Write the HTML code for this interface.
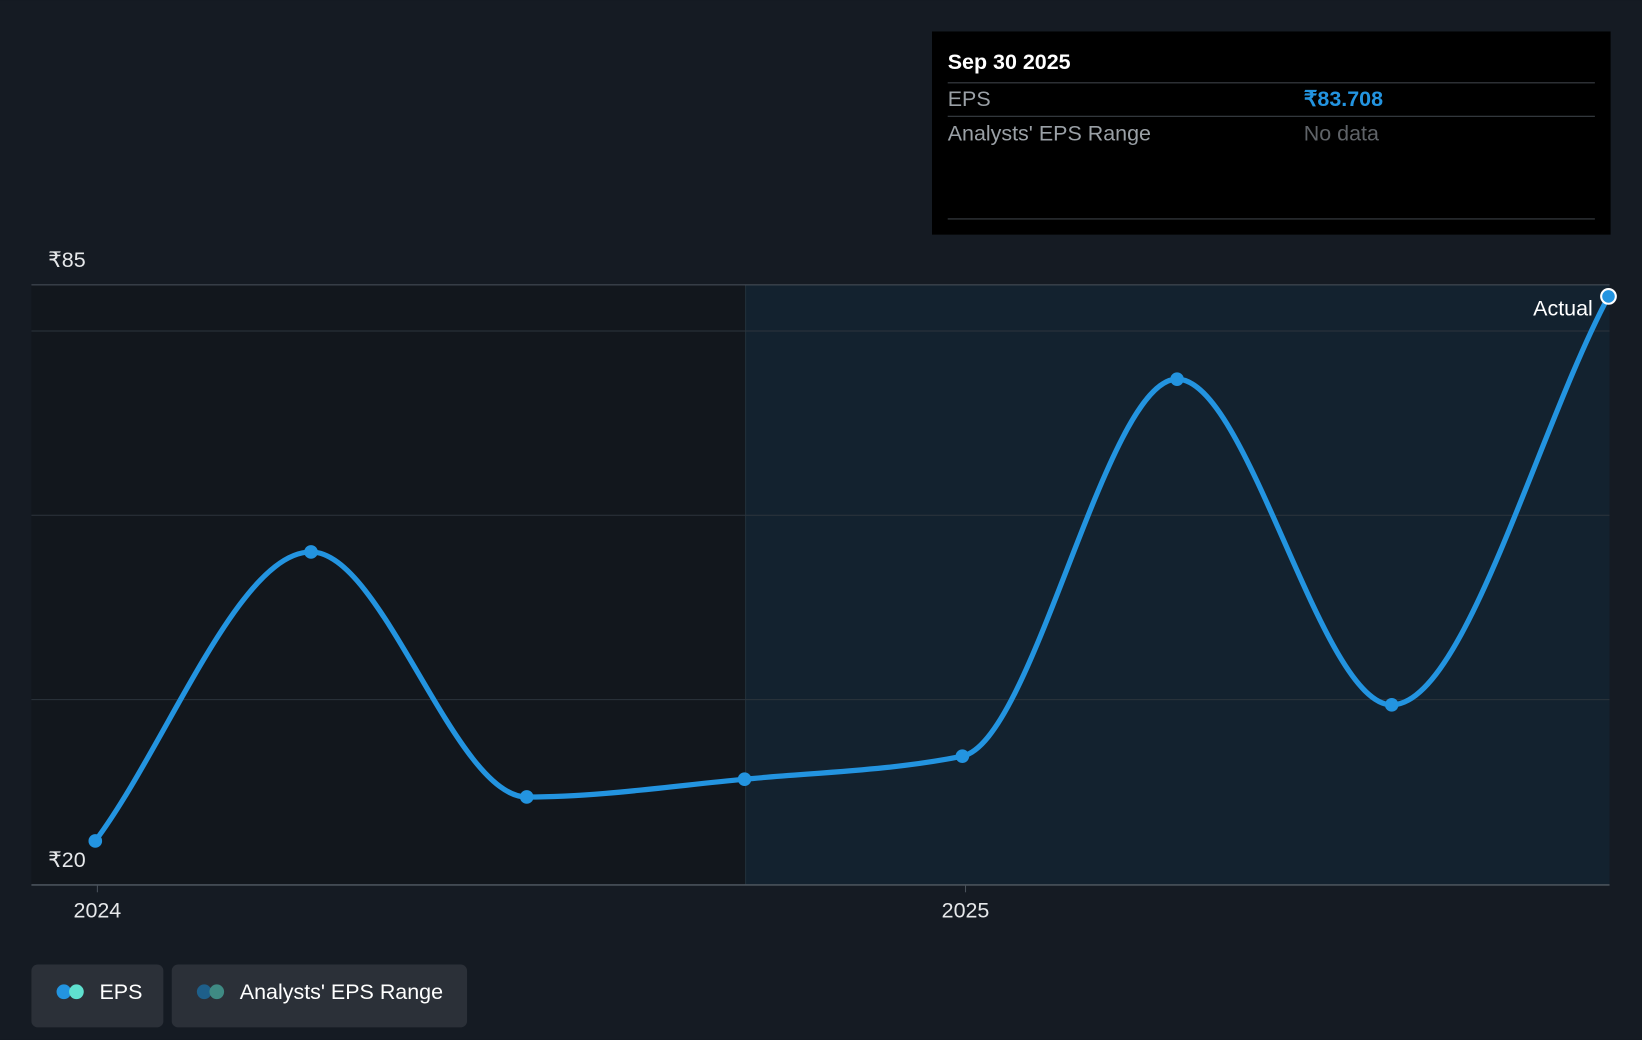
<!DOCTYPE html>
<html><head><meta charset="utf-8"><style>
html,body{margin:0;padding:0;background:#151b23;}
svg{display:block}
text{font-family:"Liberation Sans",sans-serif;}
</style></head><body>
<svg width="1642" height="1040" viewBox="0 0 1568 993" xmlns="http://www.w3.org/2000/svg">
<rect width="1568" height="993" fill="#151b23"/>
<rect x="30" y="272" width="682" height="573" fill="#12171d"/>
<rect x="712" y="272" width="825" height="573" fill="#13222f"/>
<line x1="712" y1="272" x2="712" y2="845" stroke="#22303b" stroke-width="1"/>
<g stroke="#2c343d" stroke-width="1">
<line x1="30" y1="316" x2="1537" y2="316"/>
<line x1="30" y1="492" x2="1537" y2="492"/>
<line x1="30" y1="668" x2="1537" y2="668"/>
</g>
<line x1="30" y1="272" x2="1537" y2="272" stroke="#4a525b" stroke-width="1"/>
<line x1="30" y1="845" x2="1537" y2="845" stroke="#4a525b" stroke-width="1.5"/>
<line x1="93" y1="845" x2="93" y2="852" stroke="#4a525b"/>
<line x1="922" y1="845" x2="922" y2="852" stroke="#4a525b"/>
<text x="46" y="255" fill="#e6e8ea" font-size="20.5">₹85</text>
<text x="46" y="828" fill="#e6e8ea" font-size="20.5">₹20</text>
<text x="93" y="876" fill="#e6e8ea" font-size="20.5" text-anchor="middle">2024</text>
<text x="922" y="876" fill="#e6e8ea" font-size="20.5" text-anchor="middle">2025</text>
<path d="M91,803 C159.7,711 228.3,527 297,527 C365.7,527 434.3,761 503,761 C572,761 642,750.5 711,744 C780,737.5 850,736 919,722 C987,708 1056,362 1124,362 C1192,362 1261,673 1329,673 C1398,673 1467,413 1536,283" fill="none" stroke="#2394e0" stroke-width="5" stroke-linecap="round"/>
<g fill="#2394e0">
<circle cx="91" cy="803" r="6.5"/><circle cx="297" cy="527" r="6.5"/><circle cx="503" cy="761" r="6.5"/><circle cx="711" cy="744" r="6.5"/><circle cx="919" cy="722" r="6.5"/><circle cx="1124" cy="362" r="6.5"/><circle cx="1329" cy="673" r="6.5"/>
</g>
<circle cx="1536" cy="283" r="7" fill="#2394e0" stroke="#fff" stroke-width="2"/>
<text x="1521" y="301" fill="#fff" font-size="20.5" text-anchor="end">Actual</text>
<rect x="890" y="30" width="648" height="194" fill="#000"/>
<text x="905" y="66" fill="#fff" font-size="20.5" font-weight="bold">Sep 30 2025</text>
<line x1="905" y1="79" x2="1523" y2="79" stroke="#3a3f45"/>
<text x="905" y="101" fill="#9aa0a6" font-size="20.5">EPS</text>
<text x="1245" y="101" fill="#2394e0" font-size="20.5" font-weight="bold">₹83.708</text>
<line x1="905" y1="111" x2="1523" y2="111" stroke="#3a3f45"/>
<text x="905" y="134" fill="#9aa0a6" font-size="20.5">Analysts' EPS Range</text>
<text x="1245" y="134" fill="#5f6368" font-size="20.5">No data</text>
<line x1="905" y1="209" x2="1523" y2="209" stroke="#3a3f45"/>
<rect x="30" y="921" width="126" height="60" rx="6" fill="#2b3038"/>
<circle cx="61" cy="947" r="7" fill="#2394e0"/><circle cx="73" cy="947" r="7" fill="#5fe0cf"/>
<text x="95" y="954" fill="#fff" font-size="20.5">EPS</text>
<rect x="164" y="921" width="282" height="60" rx="6" fill="#2b3038"/>
<circle cx="195" cy="947" r="7" fill="#1e5f8a"/><circle cx="207" cy="947" r="7" fill="#3f8a83"/>
<text x="229" y="954" fill="#fff" font-size="20.5">Analysts' EPS Range</text>
</svg>
</body></html>
